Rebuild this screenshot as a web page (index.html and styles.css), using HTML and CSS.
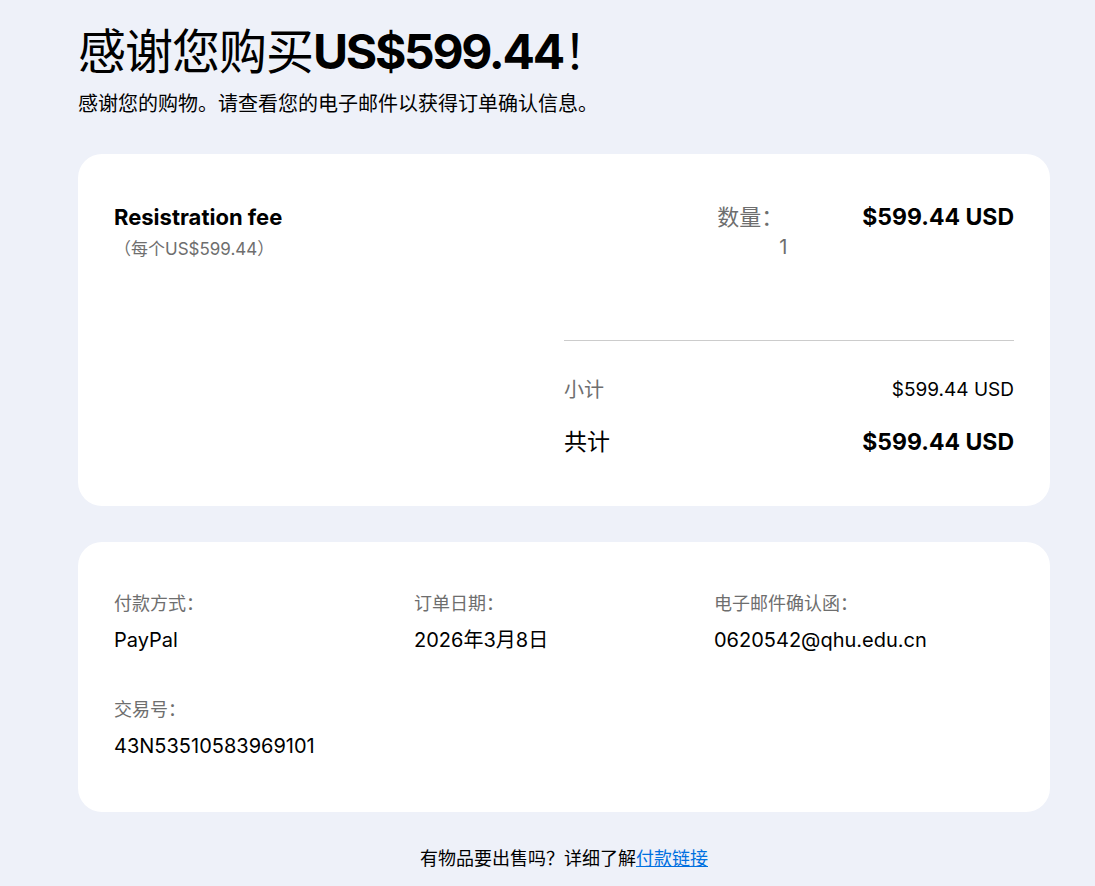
FILE: index.html
```html
<!DOCTYPE html>
<html lang="zh-CN">
<head>
  <meta charset="UTF-8">
  <meta name="viewport" content="width=device-width, initial-scale=1.0">
  <title>付款成功</title>
  <link rel="stylesheet" href="styles.css">
</head>
<body>

  <div class="page">
    <h1 class="title">感谢您购买<span class="amount">US$599.44</span>！</h1>
    <p class="subtitle">感谢您的购物。请查看您的电子邮件以获得订单确认信息。</p>

    <div class="card order-card">
      <div class="item-row">
        <div class="item-info">
          <div class="item-name">Resistration fee</div>
          <div class="item-unit">（每个US$599.44）</div>
        </div>
        <div class="item-qty">
          <div class="qty-label">数量：</div>
          <div class="qty-value">1</div>
        </div>
        <div class="item-price">$599.44 USD</div>
      </div>

      <div class="totals">
        <div class="total-line subtotal">
          <span class="total-label">小计</span>
          <span class="subtotal-value">$599.44 USD</span>
        </div>
        <div class="total-line grand">
          <span>共计</span>
          <span class="grand-value">$599.44 USD</span>
        </div>
      </div>
    </div>

    <div class="card details-card">
      <div class="detail">
        <div class="detail-label">付款方式：</div>
        <div class="detail-value">PayPal</div>
      </div>
      <div class="detail">
        <div class="detail-label">订单日期：</div>
        <div class="detail-value">2026年3月8日</div>
      </div>
      <div class="detail">
        <div class="detail-label">电子邮件确认函：</div>
        <div class="detail-value">0620542@qhu.edu.cn</div>
      </div>
      <div class="detail">
        <div class="detail-label">交易号：</div>
        <div class="detail-value">43N53510583969101</div>
      </div>
    </div>

    <p class="footer">有物品要出售吗？详细了解<a href="#">付款链接</a></p>
  </div>

</body>
</html>
```

FILE: styles.css
```css
body {
  font-family: Inter, "Noto Sans CJK SC", sans-serif;
  margin: 0;
  padding: 0;
  background-color: #eef1f9;
  color: #000;
}

.page {
  width: 972px;
  margin-left: 78px;
  padding-top: 22px;
}

.title {
  margin: 0;
  font-size: 48px;
  font-weight: normal;
  line-height: 60px;
  letter-spacing: -1px;
}

.amount {
  font-weight: bold;
  letter-spacing: -2.3px;
}

.subtitle {
  margin: 8px 0 0 0;
  font-size: 20px;
  line-height: 28px;
}

.card {
  background-color: white;
  border-radius: 24px;
  padding: 36px;
}

.order-card {
  margin-top: 36px;
  padding-top: 48px;
  padding-bottom: 49px;
}

.item-row {
  display: flex;
  align-items: flex-start;
}

.item-info {
  flex: 1;
}

.item-name {
  font-size: 22px;
  font-weight: bold;
  line-height: 30px;
}

.item-unit {
  font-size: 17px;
  color: #6e6e6e;
  line-height: 22px;
  margin-top: 6px;
}

.item-qty {
  width: 145px;
  color: #6e6e6e;
}

.qty-label {
  font-size: 22px;
  line-height: 30px;
}

.qty-value {
  font-size: 20px;
  line-height: 30px;
  padding-left: 62px;
}

.item-price {
  font-size: 23px;
  font-weight: bold;
  line-height: 30px;
}

.totals {
  width: 450px;
  margin-left: auto;
  margin-top: 78px;
  border-top: 1px solid #ccc;
  padding-top: 35px;
}

.total-line {
  display: flex;
  justify-content: space-between;
  align-items: center;
}

.subtotal {
  font-size: 20px;
  line-height: 28px;
}

.subtotal-value {
  font-size: 19px;
}

.total-label {
  color: #6e6e6e;
}

.grand {
  margin-top: 23px;
  font-size: 23px;
  line-height: 30px;
}

.grand-value {
  font-weight: bold;
}

.details-card {
  margin-top: 36px;
  display: grid;
  grid-template-columns: 300px 300px 300px;
  row-gap: 42px;
  padding-top: 49px;
  padding-bottom: 51px;
}

.detail-label {
  font-size: 18px;
  color: #6e6e6e;
  line-height: 26px;
}

.detail-value {
  font-size: 20px;
  line-height: 30px;
  margin-top: 8px;
}

.footer {
  margin: 34px 0 0 0;
  text-align: center;
  font-size: 18px;
  line-height: 26px;
}

.footer a {
  color: #0070e0;
}
```
